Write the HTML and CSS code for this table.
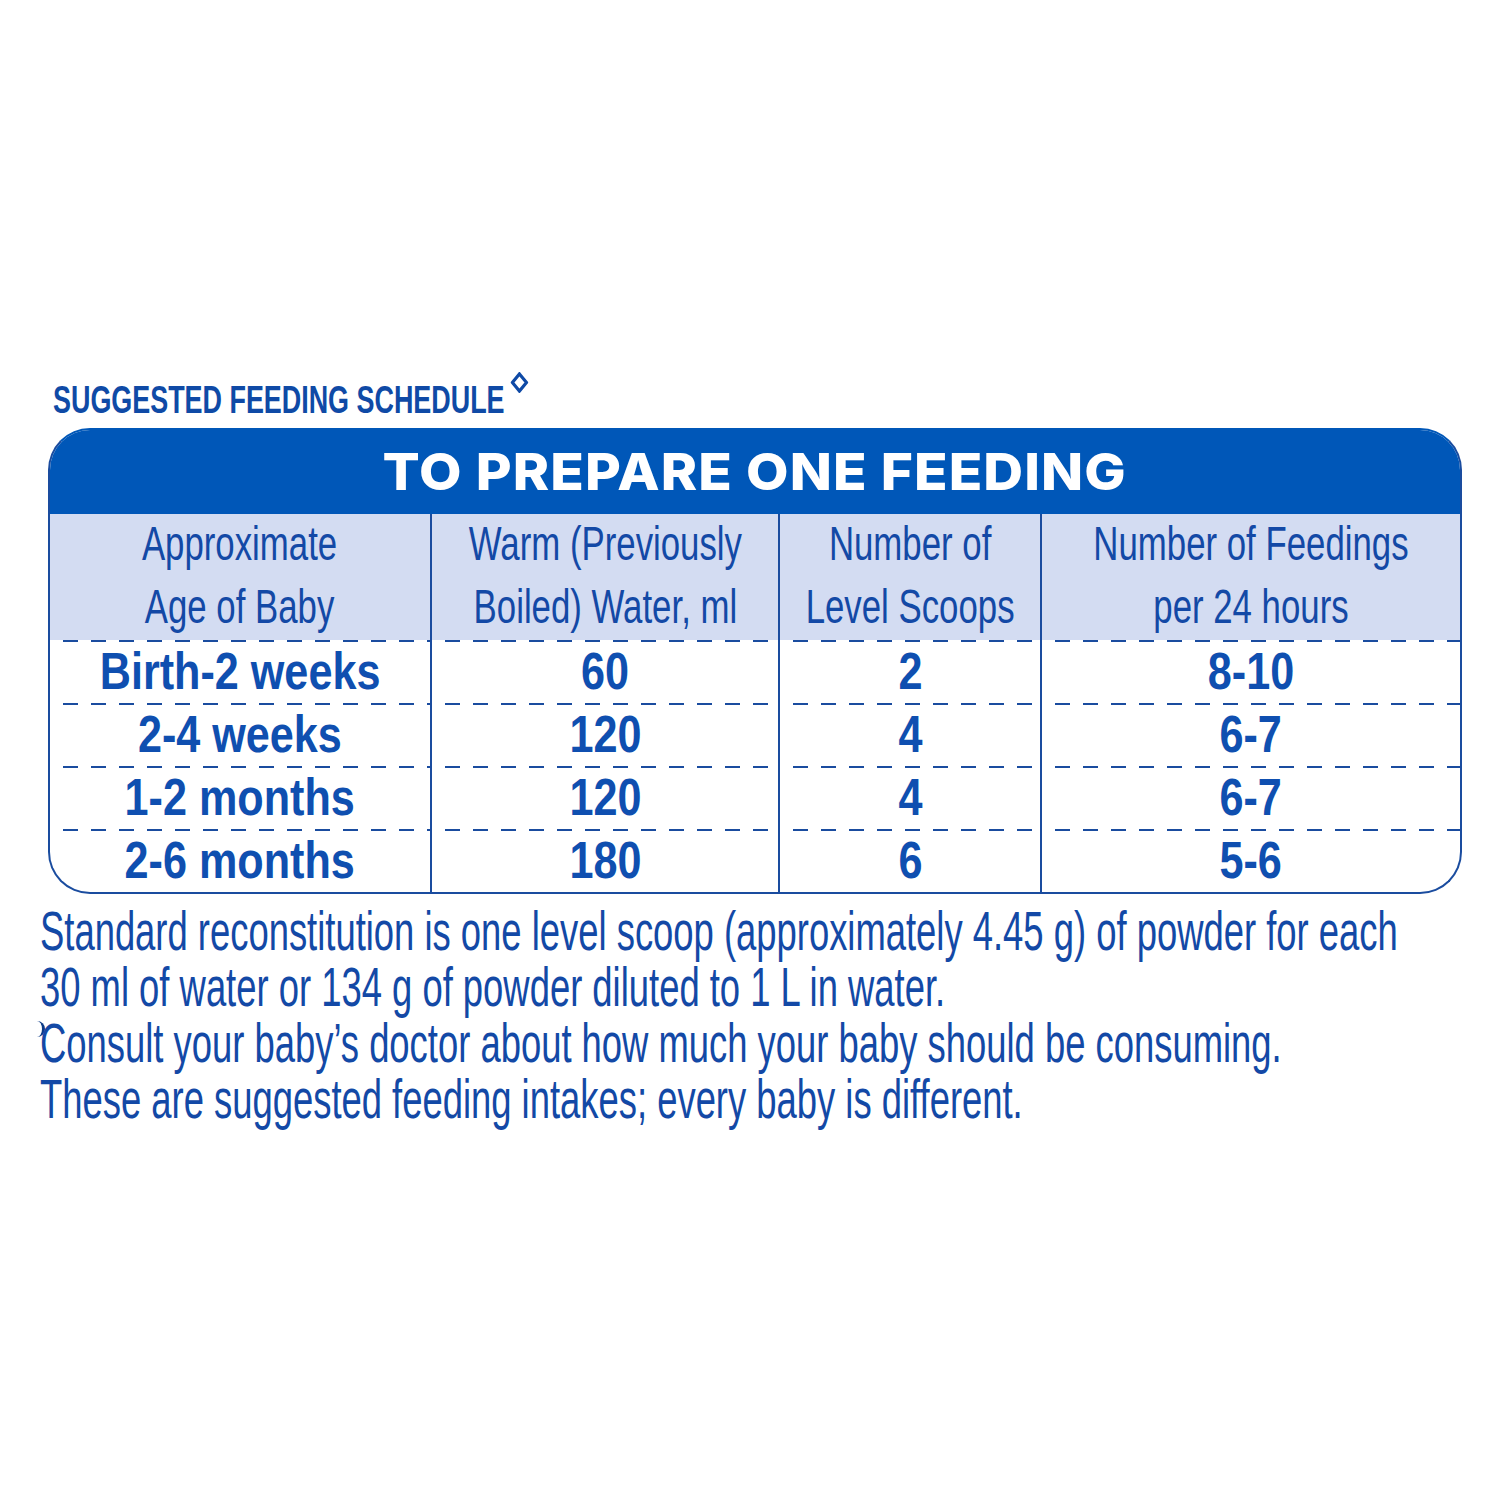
FILE: index.html
```html
<!DOCTYPE html>
<html lang="en">
<head>
<meta charset="utf-8">
<title>Suggested Feeding Schedule</title>
<link rel="stylesheet" href="styles.css">
</head>
<body>
<div class="page">
  <div class="title">
    <span class="sx sx-title">SUGGESTED FEEDING SCHEDULE<svg class="diamond" viewBox="0 0 17 20" preserveAspectRatio="none"><path d="M8.5 1.8 L15.2 10 L8.5 18.2 L1.8 10 Z" fill="none" stroke="#0f4aa6" stroke-width="3" stroke-linejoin="miter"/></svg></span>
  </div>

  <div class="table">
    <div class="band"><span class="sx sx-band">TO PREPARE ONE FEEDING</span></div>

    <div class="row head">
      <div class="cell"><span class="sx sx-head">Approximate<br>Age of Baby</span></div>
      <div class="cell"><span class="sx sx-head">Warm (Previously<br>Boiled) Water, ml</span></div>
      <div class="cell"><span class="sx sx-head">Number of<br>Level Scoops</span></div>
      <div class="cell"><span class="sx sx-head">Number of Feedings<br>per 24 hours</span></div>
    </div>

    <div class="row data">
      <div class="cell"><span class="sx sx-bold">Birth-2 weeks</span></div>
      <div class="cell"><span class="sx sx-bold">60</span></div>
      <div class="cell"><span class="sx sx-bold">2</span></div>
      <div class="cell"><span class="sx sx-bold">8-10</span></div>
    </div>
    <div class="row data">
      <div class="cell"><span class="sx sx-bold">2-4 weeks</span></div>
      <div class="cell"><span class="sx sx-bold">120</span></div>
      <div class="cell"><span class="sx sx-bold">4</span></div>
      <div class="cell"><span class="sx sx-bold">6-7</span></div>
    </div>
    <div class="row data">
      <div class="cell"><span class="sx sx-bold">1-2 months</span></div>
      <div class="cell"><span class="sx sx-bold">120</span></div>
      <div class="cell"><span class="sx sx-bold">4</span></div>
      <div class="cell"><span class="sx sx-bold">6-7</span></div>
    </div>
    <div class="row data last">
      <div class="cell"><span class="sx sx-bold">2-6 months</span></div>
      <div class="cell"><span class="sx sx-bold">180</span></div>
      <div class="cell"><span class="sx sx-bold">6</span></div>
      <div class="cell"><span class="sx sx-bold">5-6</span></div>
    </div>
  </div>

  <div class="notes">
    <div class="line"><span class="sx sx-note">Standard reconstitution is one level scoop (approximately 4.45 g) of powder for each</span></div>
    <div class="line"><span class="sx sx-note">30 ml of water or 134 g of powder diluted to 1 L in water.</span></div>
    <div class="line"><span class="mark"></span><span class="sx sx-note">Consult your baby’s doctor about how much your baby should be consuming.</span></div>
    <div class="line"><span class="sx sx-note">These are suggested feeding intakes; every baby is different.</span></div>
  </div>
</div>
</body>
</html>
```

FILE: styles.css
```css
html, body {
  margin: 0;
  padding: 0;
  background: #ffffff;
}

body {
  font-family: "Liberation Sans Narrow", "Liberation Sans", Arial, sans-serif;
  color: #1349a6;
}

.page {
  padding-top: 372px;
  width: 1500px;
  height: 1128px;
  overflow: hidden;
}

/* horizontally condensed text */
.sx {
  display: inline-block;
  white-space: nowrap;
}

.title {
  height: 44px;
  line-height: 44px;
  margin-left: 53px;
  font-size: 39px;
  font-weight: 700;
  color: #0f4aa6;
}

.sx-title {
  transform: scaleX(0.69);
  transform-origin: left center;
}

.diamond {
  width: 26px;
  height: 21px;
  margin-left: 9px;
  vertical-align: 20px;
}

.table {
  box-sizing: border-box;
  width: 1414px;
  margin-left: 48px;
  margin-top: 12px;
  border: 2px solid #1a4c9f;
  border-top-color: #0057b8;
  border-radius: 42px;
  overflow: hidden;
  background: #ffffff;
}

.band {
  height: 84px;
  line-height: 84px;
  background: #0057b8;
  color: #ffffff;
  text-align: center;
  font-family: Inter, "DejaVu Sans", sans-serif;
  font-weight: 800;
  font-size: 51px;
  letter-spacing: 1px;
}

.sx-band {
  transform: scaleX(1.08);
  transform-origin: center center;
}

.row {
  display: grid;
  grid-template-columns: 380px 348px 262px 420px;
}

.cell {
  display: flex;
  align-items: flex-start;
  justify-content: center;
  text-align: center;
}

.cell + .cell {
  border-left: 2px solid #1a4c9f;
}

.head {
  height: 126px;
  background: #d3dcf2;
}

.head .cell {
  font-size: 49px;
  line-height: 63px;
}

.sx-head {
  transform: scaleX(0.71);
  transform-origin: center center;
  margin-top: -2px;
}

.data {
  height: 63px;
}

.data .cell {
  height: 63px;
  font-size: 52px;
  font-weight: 700;
  line-height: 63px;
  color: #0f4fb0;
  background-image: repeating-linear-gradient(to right, #1a4c9f 0 15px, transparent 15px 28px);
  background-size: 100% 2px;
  background-repeat: no-repeat;
  background-position: 13px 0;
}

.sx-bold {
  transform: scaleX(0.83);
  transform-origin: center center;
}

.notes {
  position: relative;
  margin-top: 9px;
  margin-left: 40px;
}

.line {
  height: 56px;
  line-height: 56px;
  font-size: 56px;
}

.sx-note {
  transform: scaleX(0.65);
  transform-origin: left center;
}

.mark {
  position: absolute;
  left: -4px;
  top: 118px;
  width: 6px;
  height: 16px;
  border-right: 3px solid #0c3a86;
  border-radius: 0 10px 10px 0;
}
```
